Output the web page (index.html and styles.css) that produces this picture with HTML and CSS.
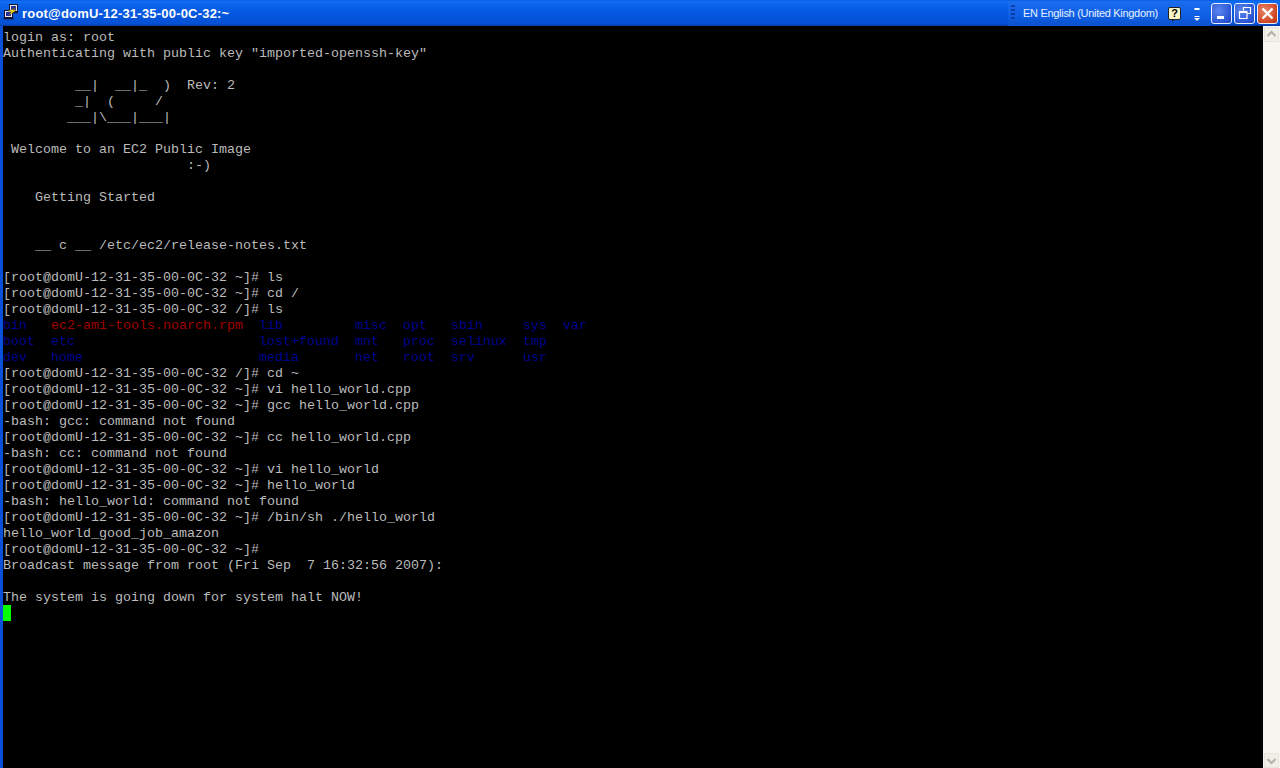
FILE: index.html
```html
<!DOCTYPE html>
<html lang="en">
<head>
<meta charset="utf-8">
<title>root@domU-12-31-35-00-0C-32:~</title>
<link rel="stylesheet" href="styles.css">
</head>
<body>
<div class="window">
  <header class="titlebar">
    <svg class="app-icon" width="18" height="18" viewBox="0 0 18 18">
      <rect x="7.500" y="0.500" width="8" height="7" fill="#e4e4ee" stroke="#14142a"/>
      <rect x="9" y="2" width="5" height="4" fill="#28309c"/>
      <path d="M7 8.500h9" stroke="#14142a" stroke-width="1.400"/>
      <rect x="2.500" y="6.500" width="8" height="7" fill="#e4e4ee" stroke="#14142a"/>
      <rect x="4" y="8" width="5" height="4" fill="#28309c"/>
      <path d="M1.500 14.500h10" stroke="#14142a" stroke-width="1.600"/>
      <path d="M14 4 6 7l3.500.5L7 11l7-4.500-3.500-.5z" fill="#f8e418" stroke="#6b5a00" stroke-width=".4"/>
    </svg>
    <span class="title">root@domU-12-31-35-00-0C-32:~</span>
    <div class="langbar">
      <span class="grip"></span>
      <span class="lang">EN English (United Kingdom)</span>
      <span class="help">?</span>
      <svg class="chevrons" width="6" height="20" viewBox="0 0 6 20">
        <path d="M0.500 5h5v2h-5zM0.500 13h5v1h-5z" fill="#fff"/>
        <path d="M0 15h6L3 18z" fill="#fff"/>
      </svg>
    </div>
    <div class="controls">
      <button class="ctl ctl-blue" aria-label="Minimize">
        <svg width="19" height="19" viewBox="0 0 19 19"><rect x="5" y="12" width="7" height="3" fill="#fff"/></svg>
      </button>
      <button class="ctl ctl-blue" aria-label="Restore">
        <svg width="19" height="19" viewBox="0 0 19 19"><path d="M8.500 6.500V3.500h7v6h-3M4.500 7.500h7.500v7H4.500zM4.500 8.500h7.500" fill="none" stroke="#fff" stroke-width="1.200"/></svg>
      </button>
      <button class="ctl ctl-red" aria-label="Close">
        <svg width="19" height="19" viewBox="0 0 19 19"><path d="M4.500 4.500l10 10M14.500 4.500l-10 10" stroke="#fff" stroke-width="2.400" fill="none"/></svg>
      </button>
    </div>
  </header>
  <div class="body">
    <main class="terminal">
<pre class="screen">login as: root
Authenticating with public key "imported-openssh-key"

         __|  __|_  )  Rev: 2
         _|  (     /
        ___|\___|___|

 Welcome to an EC2 Public Image
                       :-)

    Getting Started


    __ c __ /etc/ec2/release-notes.txt

[root@domU-12-31-35-00-0C-32 ~]# ls
[root@domU-12-31-35-00-0C-32 ~]# cd /
[root@domU-12-31-35-00-0C-32 /]# ls
<span class="dir">bin</span>   <span class="pkg">ec2-ami-tools.noarch.rpm</span>  <span class="dir">lib</span>         <span class="dir">misc</span>  <span class="dir">opt</span>   <span class="dir">sbin</span>     <span class="dir">sys</span>  <span class="dir">var</span>
<span class="dir">boot</span>  <span class="dir">etc</span>                       <span class="dir">lost+found</span>  <span class="dir">mnt</span>   <span class="dir">proc</span>  <span class="dir">selinux</span>  <span class="dir">tmp</span>
<span class="dir">dev</span>   <span class="dir">home</span>                      <span class="dir">media</span>       <span class="dir">net</span>   <span class="dir">root</span>  <span class="dir">srv</span>      <span class="dir">usr</span>
[root@domU-12-31-35-00-0C-32 /]# cd ~
[root@domU-12-31-35-00-0C-32 ~]# vi hello_world.cpp
[root@domU-12-31-35-00-0C-32 ~]# gcc hello_world.cpp
-bash: gcc: command not found
[root@domU-12-31-35-00-0C-32 ~]# cc hello_world.cpp
-bash: cc: command not found
[root@domU-12-31-35-00-0C-32 ~]# vi hello_world
[root@domU-12-31-35-00-0C-32 ~]# hello_world
-bash: hello_world: command not found
[root@domU-12-31-35-00-0C-32 ~]# /bin/sh ./hello_world
hello_world_good_job_amazon
[root@domU-12-31-35-00-0C-32 ~]#
Broadcast message from root (Fri Sep  7 16:32:56 2007):

The system is going down for system halt NOW!
<span class="cursor"> </span></pre>
    </main>
    <aside class="scrollbar">
      <div class="arrow"><svg width="15" height="15" viewBox="0 0 15 15"><path d="M3.500 9l4-4 4 4" fill="none" stroke="#b4b4ac" stroke-width="2.200"/></svg></div>
      <div class="arrow"><svg width="15" height="15" viewBox="0 0 15 15"><path d="M3.500 6l4 4 4-4" fill="none" stroke="#b4b4ac" stroke-width="2.200"/></svg></div>
    </aside>
  </div>
</div>
</body>
</html>
```
FILE: styles.css
```css
* { box-sizing: border-box; }
html, body { margin: 0; height: 100%; background: #000; overflow: hidden; }
.window { width: 1280px; height: 768px; display: flex; flex-direction: column; }

.titlebar {
  height: 26px;
  flex: none;
  display: flex;
  align-items: center;
  padding: 0 2px;
  background: linear-gradient(180deg, #0a5fe0 0, #0f6ef5 2px, #0a63ea 5px, #0558e0 13px, #0453d8 20px, #0550d4 24px, #03389c 26px);
  color: #fff;
}
.app-icon { flex: none; margin-right: 2px; }
.title {
  font: bold 13px "Liberation Sans", Arial, sans-serif;
  letter-spacing: 0.2px;
  white-space: nowrap;
}
.langbar {
  margin-left: auto;
  height: 25px;
  width: 203px;
  display: flex;
  align-items: center;
  padding-left: 3px;
  background: linear-gradient(180deg, #1c6cf0, #0f5fe4 60%, #0a50cc);
}
.grip {
  width: 4px;
  height: 16px;
  background: repeating-linear-gradient(180deg, #0a3ea8 0 2px, transparent 2px 4px);
  margin-right: 8px;
}
.lang {
  font: 11px "Liberation Sans", sans-serif;
  letter-spacing: -0.3px;
  width: 145px;
  white-space: nowrap;
  color: #e8f0ff;
}
.help {
  position: relative;
  width: 13px;
  height: 13px;
  background: #fbf8c8;
  border: 1px solid #222;
  border-radius: 2px;
  color: #000;
  font: bold 11px/11px "Liberation Sans", sans-serif;
  text-align: center;
}
.help::after {
  content: "";
  position: absolute;
  left: 3px;
  top: 11px;
  width: 0;
  height: 0;
  border-top: 3px solid #222;
  border-right: 3px solid transparent;
}
.chevrons { margin-left: 13px; }
.controls { display: flex; gap: 2px; }
.ctl {
  width: 21px;
  height: 21px;
  padding: 0;
  border: 1px solid #e8eefc;
  border-radius: 3px;
  display: flex;
  align-items: center;
  justify-content: center;
}
.ctl-blue { background: radial-gradient(circle at 35% 35%, #5a86ee, #2c56d4 70%, #2248c4); }
.ctl-red { background: radial-gradient(circle at 35% 35%, #e8866a, #d24a28 65%, #b43210); }

.body { flex: 1; display: flex; min-height: 0; }
.terminal {
  flex: 1;
  background: #000;
  border-left: 3px solid #0a50d8;
  padding-top: 4px;
  overflow: hidden;
}
.screen {
  margin: 0;
  font: 13.333px/16px "Liberation Mono", "Courier New", monospace;
  color: #bbb;
}
.dir { color: #000090; }
.pkg { color: #a00000; }
.cursor { display: inline-block; width: 8px; height: 16px; margin-top: -1px; background: #00ff00; vertical-align: top; }

.scrollbar {
  width: 17px;
  flex: none;
  background: #f6f5f0;
  display: flex;
  flex-direction: column;
  justify-content: space-between;
  padding: 1px 1px 0;
}
.arrow {
  width: 15px;
  height: 15px;
  background: #f0efe8;
  box-shadow: inset 0 0 0 1px #e6e5dc;
  border-radius: 1px;
}
.arrow svg { display: block; }
```
